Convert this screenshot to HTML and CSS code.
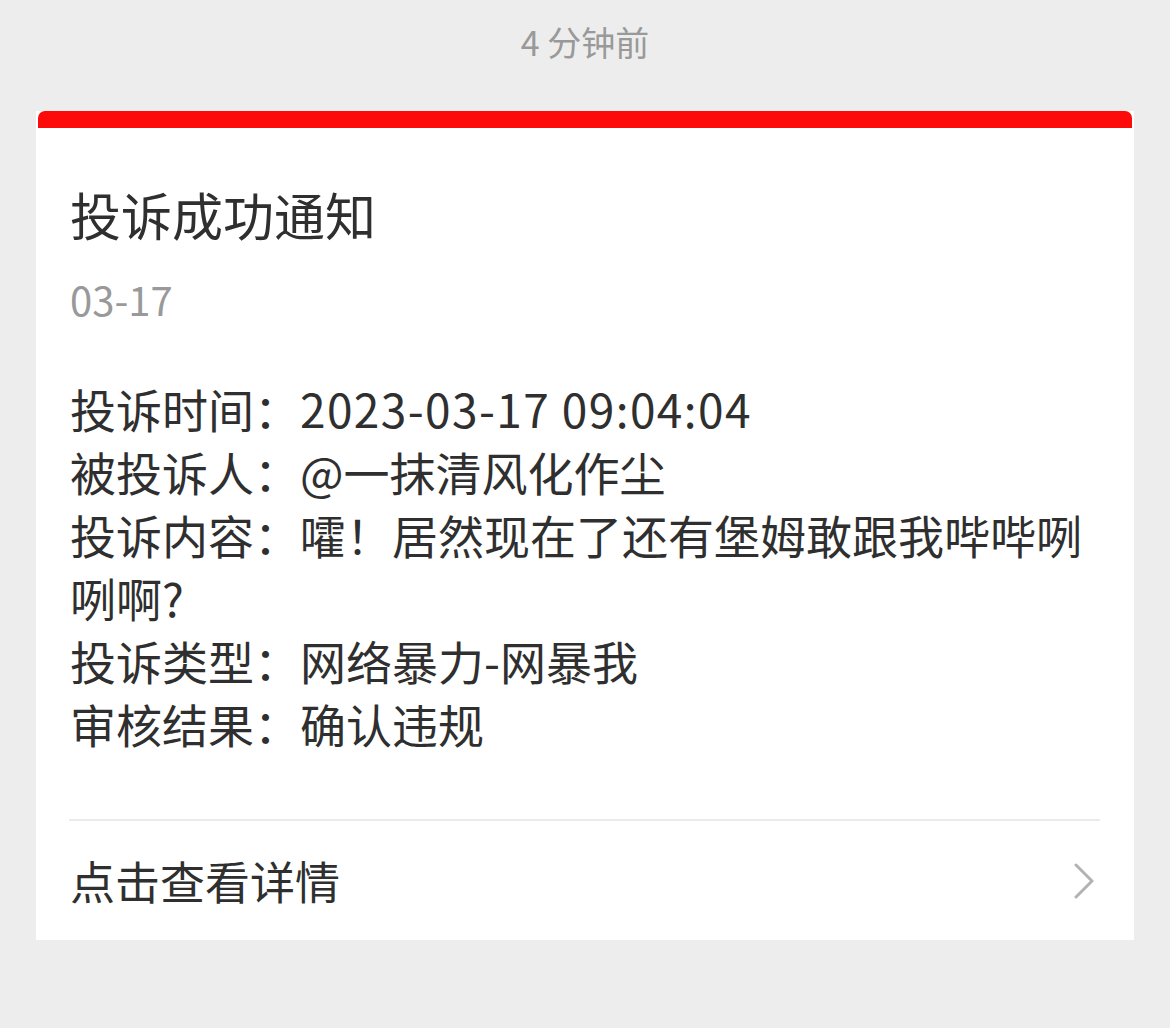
FILE: index.html
```html
<!DOCTYPE html>
<html lang="zh-CN">
    <head>
        <meta charset="UTF-8">
        <meta name="viewport" content="width=device-width, initial-scale=1.0">
        <title>投诉成功通知</title>
        <link rel="stylesheet" href="styles.css">
    </head>
    <body>
        <div class="time-tip">4 分钟前</div>
        <div class="card">
            <div class="card-bar"></div>
            <div class="card-body">
                <div class="card-title">投诉成功通知</div>
                <div class="card-date">03-17</div>
                <div class="card-info">
                    <p>投诉时间：<span class="num">2023-03-17 09:04:04</span></p>
                    <p>被投诉人：@一抹清风化作尘</p>
                    <p>投诉内容：嚯！居然现在了还有堡姆敢跟我哔哔咧咧啊?</p>
                    <p>投诉类型：网络暴力-网暴我</p>
                    <p>审核结果：确认违规</p>
                </div>
            </div>
            <div class="card-footer">
                <span>点击查看详情</span>
                <svg class="arrow" width="20" height="36" viewBox="0 0 20 36">
                    <path d="M2 2 L18 18 L2 34" fill="none" stroke="#b2b2b2" stroke-width="3" stroke-linecap="round" stroke-linejoin="round"/>
                </svg>
            </div>
        </div>
    </body>
</html>
```

FILE: styles.css
```css
body {
    font-family: "Noto Sans CJK SC", "Noto Sans", sans-serif;
    margin: 0;
    padding: 0;
    background-color: #ededed;
    color: #333;
}

.time-tip {
    text-align: center;
    font-size: 34px;
    line-height: 44px;
    color: #999;
    padding-top: 20px;
}

.card {
    margin: 47px 36px 0;
    background-color: #fff;
}

.card-bar {
    height: 17px;
    margin: 0 2px;
    background-color: #fd0b0b;
    border-radius: 7px 7px 0 0;
}

.card-body {
    padding: 51px 34px 64px;
}

.card-title {
    font-size: 51px;
    line-height: 70px;
    color: #2f2f2f;
}

.card-date {
    margin-top: 22px;
    font-size: 40px;
    line-height: 56px;
    color: #999;
}

.card-info {
    margin-top: 50px;
}

.card-info p {
    margin: 0;
    font-size: 46px;
    line-height: 63px;
    color: #2f2f2f;
}

.card-info .num {
    letter-spacing: 1.4px;
}

.card-footer {
    display: flex;
    align-items: center;
    justify-content: space-between;
    height: 119px;
    margin: 0 34px 0 33px;
    border-top: 2px solid #ebebeb;
    font-size: 45px;
    color: #2f2f2f;
}

.card-footer span {
    padding-left: 1px;
}

.card-footer .arrow {
    margin-right: 6px;
}
```
